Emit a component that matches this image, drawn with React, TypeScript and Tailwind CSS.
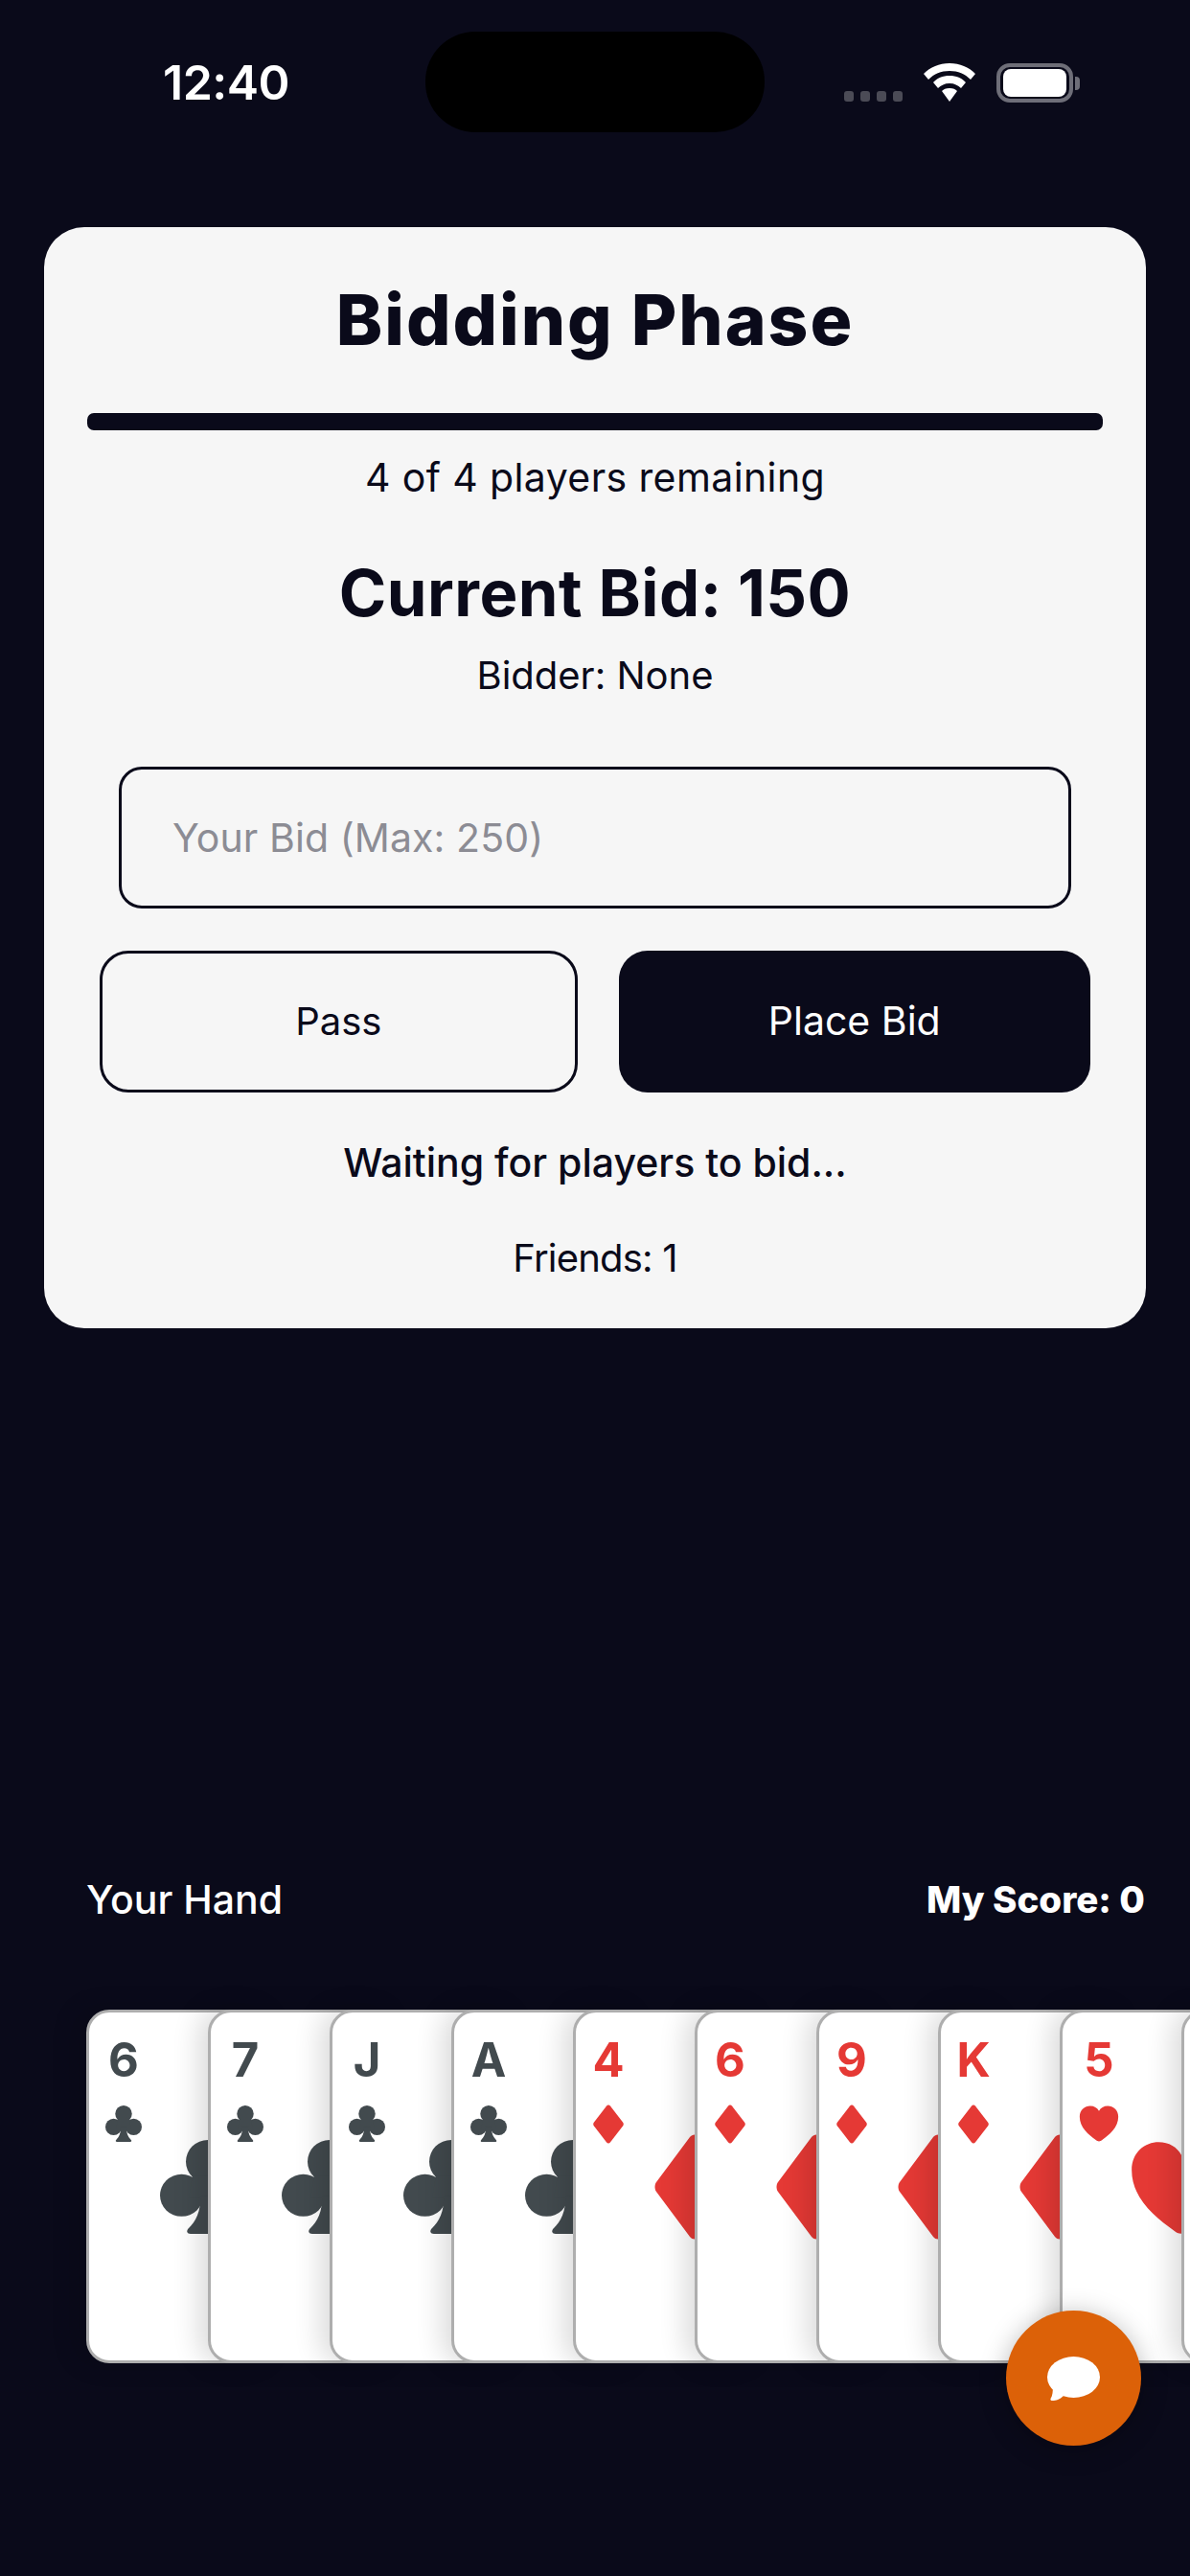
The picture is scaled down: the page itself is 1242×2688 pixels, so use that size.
const DIAMOND = "M45 3.500c2.500-3 7.500-3 10 0l35 42c2 2.500 2 6.500 0 9l-35 42c-2.500 3-7.500 3-10 0l-35-42c-2-2.500-2-6.500 0-9z";
const HEART = "M50 96c-3 0-5-1.500-7-3C24 79 2 60 2 32C2 14 15 4 28 4c10 0 18 5 22 13c4-8 12-13 22-13c13 0 26 10 26 28c0 28-22 47-41 61c-2 1.500-4 3-7 3z";

type Suit = "club" | "diamond" | "heart";

// the tenth card only peeks in at the right edge, its rank is off screen
const hand: { rank: string; suit: Suit }[] = [
  { rank: "6", suit: "club" },
  { rank: "7", suit: "club" },
  { rank: "J", suit: "club" },
  { rank: "A", suit: "club" },
  { rank: "4", suit: "diamond" },
  { rank: "6", suit: "diamond" },
  { rank: "9", suit: "diamond" },
  { rank: "K", suit: "diamond" },
  { rank: "5", suit: "heart" },
  { rank: "", suit: "heart" },
];

function SuitIcon({ suit, className }: { suit: Suit; className: string }) {
  return (
    <svg viewBox="0 0 100 100" preserveAspectRatio="none" className={className} fill="currentColor">
      {suit === "club" && (
        <>
          <circle cx="50" cy="23" r="23" />
          <circle cx="22.500" cy="59" r="22.500" />
          <circle cx="77.500" cy="59" r="22.500" />
          <path d="M34 38H66L70 62H30z" />
          <path d="M42 60C43 76 37 87 30 94C27 97 28 100 32 100H68C72 100 73 97 70 94C63 87 57 76 58 60z" />
        </>
      )}
      {suit === "diamond" && <path d={DIAMOND} />}
      {suit === "heart" && <path d={HEART} />}
    </svg>
  );
}

function PlayingCard({ rank, suit, first }: { rank: string; suit: Suit; first: boolean }) {
  const color = suit === "club" ? "text-[#424a4e]" : "text-[#e53935]";
  const column = suit === "club" ? "w-[72px]" : suit === "diamond" ? "w-[68px]" : "w-[76px]";
  return (
    <div
      className={`relative h-[369px] w-[200px] shrink-0 rounded-[24px] border-[3px] border-[#aeaeae] bg-white shadow-[-10px_0_28px_rgba(0,0,0,0.14)] ${color} ${first ? "" : "-ml-[73px]"}`}
    >
      <div className={`flex flex-col items-center pt-[21px] ${column}`}>
        <span className="h-[58px] text-[49px] leading-[58px] font-bold">{rank}</span>
        {suit === "club" && <SuitIcon suit={suit} className="mt-[18px] h-[38px] w-[38px]" />}
        {suit === "diamond" && <SuitIcon suit={suit} className="mt-[17px] h-[41px] w-[38px]" />}
        {suit === "heart" && <SuitIcon suit={suit} className="mt-[17px] h-[40px] w-[42px]" />}
      </div>
      {suit === "club" && <SuitIcon suit={suit} className="absolute top-[133px] left-[74px] h-[98px] w-[100px]" />}
      {suit === "diamond" && <SuitIcon suit={suit} className="absolute top-[126px] left-[74px] h-[112px] w-[100px]" />}
      {suit === "heart" && <SuitIcon suit={suit} className="absolute top-[131px] left-[70px] h-[104px] w-[108px]" />}
    </div>
  );
}

function StatusBar() {
  return (
    <div className="flex h-[237px] items-start text-white">
      <span className="mt-[56px] ml-[170px] w-[132px] text-[50px] leading-[60px] font-semibold tracking-[-0.500px]">
        12:40
      </span>
      <div className="mt-[33px] ml-[142px] h-[105px] w-[354px] rounded-[52px] bg-black" />
      <div className="mt-[65px] ml-[83px] flex h-[42px] items-end">
        <div className="mb-[1px] flex gap-[7px]">
          <div className="h-[11px] w-[10px] rounded-[3px] bg-[#4b4b56]" />
          <div className="h-[11px] w-[10px] rounded-[3px] bg-[#4b4b56]" />
          <div className="h-[11px] w-[10px] rounded-[3px] bg-[#4b4b56]" />
          <div className="h-[11px] w-[10px] rounded-[3px] bg-[#4b4b56]" />
        </div>
        <svg viewBox="0 0 54 40" className="mb-[1px] ml-[22px] h-[40px] w-[54px]" fill="#fff">
          <path d="M27 0C16 0 7 4 0 11l5 6c6-6 13-9 22-9s16 3 22 9l5-6C47 4 38 0 27 0z" />
          <path d="M27 13c-7 0-13 2.500-17 7l5 6c3-3 7-5 12-5s9 2 12 5l5-6c-4-4.500-10-7-17-7z" />
          <path d="M27 26c-4 0-6 1-8 3l8 11 8-11c-2-2-4-3-8-3z" />
        </svg>
        <div className="ml-[22px] flex h-[41px] w-[80px] items-center justify-center rounded-[14px] border-[4px] border-[#6e6e78]">
          <div className="h-[29px] w-[66px] rounded-[8px] bg-white" />
        </div>
        <div className="mb-[13px] ml-[2px] h-[14px] w-[5px] rounded-r-[4px] bg-[#6e6e78]" />
      </div>
    </div>
  );
}

export default function App() {
  return (
    <div className="relative h-[2688px] w-[1242px] overflow-hidden bg-[#0a0a1a] font-['Inter',sans-serif] text-[#0a0a1a]">
      <StatusBar />

      <div className="mx-[46px] flex h-[1149px] flex-col rounded-[42px] bg-[#f6f6f6] pt-[57px]">
        <h1 className="text-center text-[73px] leading-[80px] font-extrabold tracking-[2px]">Bidding Phase</h1>
        <div className="mx-[45px] mt-[57px] h-[18px] rounded-[7px] bg-[#0a0a1a]" />
        <p className="mt-[19px] text-center text-[41px] leading-[60px] tracking-[0.400px]">4 of 4 players remaining</p>
        <p className="mt-[51px] text-center text-[67px] leading-[80px] font-bold tracking-[0.500px]">Current Bid: 150</p>
        <p className="mt-[16px] text-center text-[40px] leading-[60px]">Bidder: None</p>

        <input
          placeholder="Your Bid (Max: 250)"
          className="mx-[78px] mt-[65px] h-[148px] rounded-[24px] border-[3px] border-[#0a0a1a] px-[53px] text-[41px] tracking-[0.100px] outline-none placeholder:text-[#8c8c94]"
        />

        <div className="mx-[58px] mt-[44px] flex gap-[43px]">
          <button className="h-[148px] flex-1 rounded-[30px] border-[3px] border-[#0a0a1a] text-[40px]">Pass</button>
          <button className="h-[148px] flex-1 rounded-[30px] bg-[#0a0a1a] text-[41px] text-white">Place Bid</button>
        </div>

        <p className="mt-[43px] text-center text-[41px] leading-[60px] font-medium">Waiting for players to bid...</p>
        <p className="mt-[40px] text-center text-[40px] leading-[60px] tracking-[-0.800px]">Friends: 1</p>
      </div>

      <div className="mt-[566px] flex items-center justify-between pr-[47px] pl-[90px] text-white">
        <span className="text-[41px] leading-[60px] font-medium">Your Hand</span>
        <span className="text-[38.500px] leading-[60px] font-extrabold">My Score: 0</span>
      </div>

      <div className="mt-[85px] flex pl-[90px]">
        {hand.map((card, i) => (
          <PlayingCard key={card.rank + card.suit} rank={card.rank} suit={card.suit} first={i === 0} />
        ))}
      </div>

      <button className="absolute top-[2411px] left-[1050px] flex h-[141px] w-[141px] items-center justify-center rounded-full bg-[#dc6108] shadow-[0_4px_28px_rgba(0,0,0,0.28)]">
        <svg viewBox="0 0 55 46" className="h-[46px] w-[55px]" fill="#fff">
          <ellipse cx="27.500" cy="21.500" rx="27.500" ry="21.500" />
          <path d="M6 30C6 36 5.500 41 3.500 44C3 45.500 4 46 5.500 46C9 46 13 45 17 41z" />
        </svg>
      </button>
    </div>
  );
}
